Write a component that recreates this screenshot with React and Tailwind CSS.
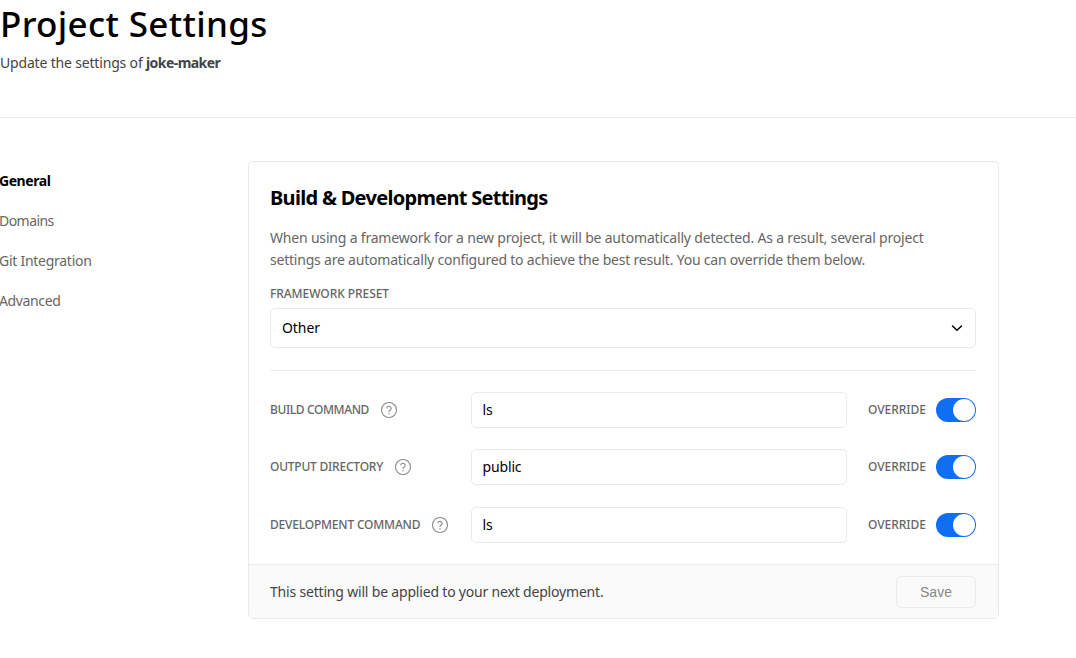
const navItems = [
  { label: "General", className: "font-bold text-black tracking-[-0.44px]" },
  { label: "Domains", className: "text-[#666] tracking-[-0.55px]" },
  { label: "Git Integration", className: "text-[#666] tracking-[-0.27px]" },
  { label: "Advanced", className: "text-[#666] tracking-[-0.36px]" },
];

const commands = [
  { label: "BUILD COMMAND", value: "ls", labelClass: "tracking-[-0.386px]", rowClass: "mt-[21px]" },
  { label: "OUTPUT DIRECTORY", value: "public", labelClass: "tracking-[-0.216px]", rowClass: "mt-[21px]" },
  { label: "DEVELOPMENT COMMAND", value: "ls", labelClass: "tracking-[-0.2px]", rowClass: "mt-[22px]" },
];

function HelpIcon() {
  return (
    <svg className="ml-[11px] size-[18px] shrink-0" viewBox="0 0 18 18" fill="none" stroke="#888" strokeWidth="1.1" strokeLinecap="round" strokeLinejoin="round">
      <circle cx="9" cy="9" r="7.5" />
      <path d="M6.8 6.9a2.25 2.25 0 0 1 4.4.7c0 1.5-2.2 2-2.2 2.7v.2" />
      <path d="M9 12.6v.2" strokeWidth="1.3" />
    </svg>
  );
}

function Toggle() {
  return (
    <button role="switch" aria-checked="true" className="ml-[10px] flex h-6 w-10 items-center justify-end rounded-full bg-[#0f6ff3] pr-px">
      <span className="size-[22px] rounded-full bg-white" />
    </button>
  );
}

function CommandRow({ label, value, labelClass, rowClass }) {
  return (
    <div className={`flex h-9 items-center ${rowClass}`}>
      <div className="flex w-[201px] items-center">
        <span className={`whitespace-nowrap text-xs font-medium text-[#666] ${labelClass}`}>{label}</span>
        <HelpIcon />
      </div>
      <div className="flex h-9 w-[376px] items-center rounded-[5px] border border-[#eaeaea] bg-white pl-[10.5px] text-sm tracking-[-0.15px] text-black">
        {value}
      </div>
      <div className="ml-auto flex items-center">
        <span className="text-xs font-medium tracking-[-0.03px] text-[#666]">OVERRIDE</span>
        <Toggle />
      </div>
    </div>
  );
}

export default function App() {
  return (
    <div className="h-[658px] w-[1076px] overflow-hidden bg-white font-['Noto_Sans',sans-serif] text-sm text-black">
      <header className="h-[118px] border-b border-[#eaeaea]">
        <h1 className="h-12 text-[35px] leading-[48px] font-medium tracking-[0.33px]">Project Settings</h1>
        <p className="mt-1 leading-[22px] tracking-[-0.174px] text-[#444]">
          Update the settings of <b className="font-bold tracking-[-0.56px]">joke-maker</b>
        </p>
      </header>
      <div className="flex pt-[43px]">
        <nav className="flex w-[248px] shrink-0 flex-col">
          {navItems.map((item) => (
            <a key={item.label} className={`-ml-px h-10 leading-10 ${item.className}`}>{item.label}</a>
          ))}
        </nav>
        <section className="flex h-[458px] w-[751px] flex-col overflow-hidden rounded-[5px] border border-[#eaeaea]">
          <div className="flex-1 pt-[20px] pr-[22px] pl-[21px]">
            <h2 className="h-8 text-xl leading-8 font-bold tracking-[-0.7px]">Build &amp; Development Settings</h2>
            <p className="mt-[13px] leading-[22px] text-[#666]">
              <span className="block whitespace-nowrap tracking-[-0.19px]">When using a framework for a new project, it will be automatically detected. As a result, several project</span>
              <span className="block whitespace-nowrap tracking-[-0.209px]">settings are automatically configured to achieve the best result. You can override them below.</span>
            </p>
            <div className="mt-[14px] h-[18px] text-xs leading-[18px] font-medium tracking-[-0.06px] text-[#666]">FRAMEWORK PRESET</div>
            <div className="mt-[5px] flex h-10 items-center justify-between rounded-[5px] border border-[#eaeaea] pr-[12px] pl-[11px] tracking-[-0.06px]">
              Other
              <svg className="h-3 w-3" viewBox="0 0 12 12" fill="none" stroke="#000" strokeWidth="1.5" strokeLinecap="round" strokeLinejoin="round">
                <path d="M1.5 4 6 8.3 10.5 4" />
              </svg>
            </div>
            <div className="mt-[22px] h-px bg-[#eaeaea]" />
            {commands.map((c) => (
              <CommandRow key={c.label} {...c} />
            ))}
          </div>
          <footer className="flex h-[54px] items-center justify-between border-t border-[#eaeaea] bg-[#fafafa] pr-[22px] pl-[21px]">
            <p className="tracking-[-0.187px] text-[#444]">This setting will be applied to your next deployment.</p>
            <button className="h-8 w-20 rounded-[5px] border border-[#eaeaea] font-['Liberation_Sans',sans-serif] text-sm text-[#888]">Save</button>
          </footer>
        </section>
      </div>
    </div>
  );
}
